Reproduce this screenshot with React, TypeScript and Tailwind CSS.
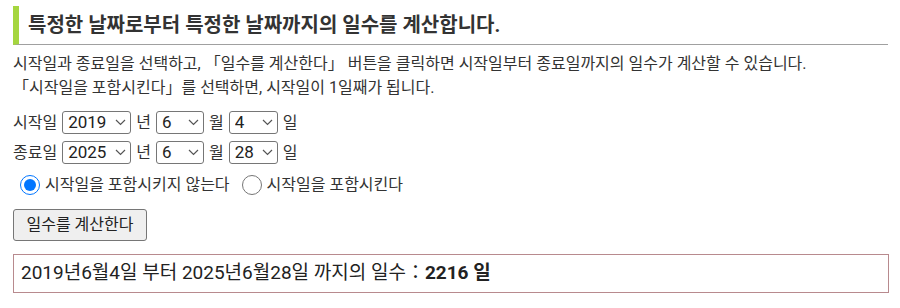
import { useState } from 'react'

const font = { fontFamily: 'Roboto, "Noto Sans CJK KR", sans-serif' }

function DateSelect({ value, options, width }: { value: number; options: number[]; width: string }) {
  const [v, setV] = useState(value)
  return (
    <div className={`relative ${width}`}>
      <select
        value={v}
        onChange={(e) => setV(Number(e.target.value))}
        className="h-[23px] w-full appearance-none rounded-[3px] border border-[#767676] bg-white pl-[5px] text-[17px] leading-[21px] text-[#222]"
      >
        {options.map((o) => (
          <option key={o} value={o}>
            {o}
          </option>
        ))}
      </select>
      <svg
        className="pointer-events-none absolute right-[5px] top-[8px]"
        width="11"
        height="7"
        viewBox="0 0 11 7"
        fill="none"
      >
        <path d="M1 1l4.5 4.5L10 1" stroke="#555" strokeWidth="1.2" />
      </svg>
    </div>
  )
}

const years = Array.from({ length: 30 }, (_, i) => 2000 + i)
const months = Array.from({ length: 12 }, (_, i) => i + 1)
const days = Array.from({ length: 31 }, (_, i) => i + 1)

function DateRow({ label, y, m, d }: { label: string; y: number; m: number; d: number }) {
  return (
    <div className="flex items-center gap-[5px] h-[30px]">
      <span>{label}</span>
      <DateSelect value={y} options={years} width="w-[69px]" />
      <span>년</span>
      <DateSelect value={m} options={months} width="w-[48px]" />
      <span>월</span>
      <DateSelect value={d} options={days} width="w-[49px]" />
      <span>일</span>
    </div>
  )
}

export default function App() {
  const [include, setInclude] = useState(false)

  return (
    <div className="w-[900px] h-[308px] bg-white px-[13px] pt-[6px] text-[16px] text-[#333]" style={font}>
      <h2 className="border-l-[6px] border-b border-l-[#a5d63f] border-b-[#a0a0a0] pl-[9px] text-[20px] font-bold leading-[38px] text-[#333] w-[875px]">
        특정한 날짜로부터 특정한 날짜까지의 일수를 계산합니다.
      </h2>

      <p className="mt-[7px] leading-[24px]">
        시작일과 종료일을 선택하고, 「일수를 계산한다」 버튼을 클릭하면 시작일부터 종료일까지의 일수가 계산할 수 있습니다.
        <br />
        「시작일을 포함시킨다」를 선택하면, 시작일이 1일째가 됩니다.
      </p>

      <div className="mt-[8px]">
        <DateRow label="시작일" y={2019} m={6} d={4} />
        <DateRow label="종료일" y={2025} m={6} d={28} />
      </div>

      <div className="mt-[3px] flex items-center h-[28px] pl-[7px]">
        <label className="flex items-center gap-[5px]">
          <input
            type="radio"
            name="include"
            checked={!include}
            onChange={() => setInclude(false)}
            className="m-0 h-[20px] w-[20px] accent-[#0075ff]"
          />
          <span>시작일을 포함시키지 않는다</span>
        </label>
        <label className="ml-[12px] flex items-center gap-[5px]">
          <input
            type="radio"
            name="include"
            checked={include}
            onChange={() => setInclude(true)}
            className="m-0 h-[20px] w-[20px] accent-[#0075ff]"
          />
          <span>시작일을 포함시킨다</span>
        </label>
      </div>

      <button className="mt-[10px] h-[32px] w-[134px] rounded-[3px] border border-[#767676] bg-[#efefef] text-[16px] text-[#222]">
        일수를 계산한다
      </button>

      <div className="mt-[13px] w-[876px] h-[39px] border border-[#b88a8e] px-[7px] flex items-center text-[19px] text-[#222]">
        2019년6월4일 부터 2025년6월28일 까지의 일수：<b className="font-bold">2216 일</b>
      </div>
    </div>
  )
}
